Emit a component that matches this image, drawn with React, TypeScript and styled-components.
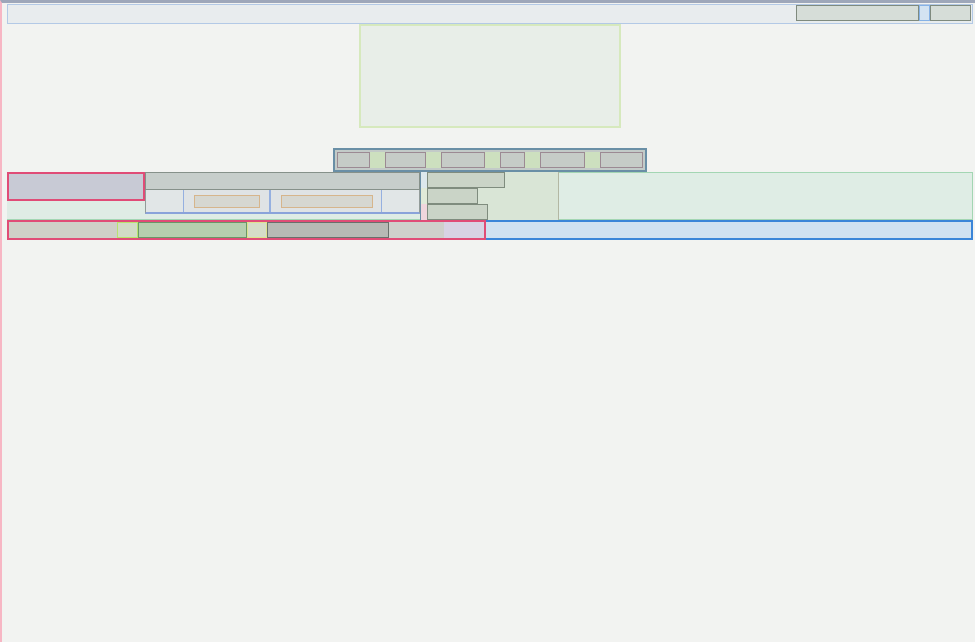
import React from "react";
import styled, { createGlobalStyle } from "styled-components";

const Global = createGlobalStyle`
  html, body { margin: 0; padding: 0; background: #f2f3f1; font-family: "Liberation Sans", Arial, sans-serif; }
  * { box-sizing: border-box; }
`;

const Page = styled.div`
  min-height: 642px;
  background: #f2f3f1;
  border-left: 2px solid #f7b6c4;
  border-top: 3px solid #9ea7ba;
  padding: 1px 2px 0 5px;
  display: flex;
  flex-direction: column;
`;

const Header = styled.header`
  height: 20px;
  border: 1px solid #b3c9e6;
  background: #e8ecee;
  display: flex;
  justify-content: flex-end;
  align-items: flex-start;
  padding-right: 1px;
`;

const HeaderItem = styled.div<{ $w: number; $blue?: boolean }>`
  width: ${(p) => p.$w}px;
  height: 16px;
  background: ${(p) => (p.$blue ? "#d3e3f2" : "#d6ddd8")};
  border: 1px solid ${(p) => (p.$blue ? "#86b2e6" : "#7f8a7e")};
`;

const Hero = styled.section`
  align-self: center;
  width: 262px;
  height: 104px;
  margin-bottom: 20px;
  border: 2px solid #d6e9bd;
  background: #e8eee8;
`;

const Toolbar = styled.nav`
  align-self: center;
  width: 314px;
  height: 24px;
  border: 2px solid #6a8fa6;
  background: #c3cbc8;
  display: flex;
  align-items: center;
  padding: 0 2px;
`;

const ToolButton = styled.div<{ $w: number }>`
  width: ${(p) => p.$w}px;
  height: 16px;
  background: #c6ccc7;
  border: 1px solid #9c8a93;
`;

const ToolGap = styled.div`
  width: 15px;
  height: 16px;
  background: #cde0bf;
`;

const MainRow = styled.div`
  height: 48px;
  border: 1px solid #a3d6b3;
  border-left: none;
  background: #dfece5;
  display: flex;
  align-items: flex-start;
`;

const Brand = styled.div`
  width: 138px;
  height: 29px;
  border: 2px solid #e04c77;
  background: #c8cad5;
  margin-top: -1px;
`;

const Panel = styled.div`
  width: 275px;
  display: flex;
  flex-direction: column;
  margin-top: -1px;
`;

const PanelTop = styled.div`
  height: 18px;
  background: #c7cecb;
  border: 1px solid #86918a;
`;

const PanelBody = styled.div`
  height: 24px;
  display: flex;
  border: 1px solid #939c9a;
  border-top: none;
  border-bottom: 2px solid #8aa3da;
  background: #e1e6e7;
`;

const PanelCell = styled.div<{ $w: number; $framed?: boolean }>`
  width: ${(p) => p.$w}px;
  display: flex;
  align-items: center;
  padding-left: 10px;
  border-left: ${(p) => (p.$framed ? "1px solid #95b0e0" : "none")};
  border-right: ${(p) => (p.$framed ? "1px solid #95b0e0" : "none")};
  background: ${(p) => (p.$framed ? "#dfe3e5" : "transparent")};
`;

const Field = styled.div<{ $w: number }>`
  width: ${(p) => p.$w}px;
  height: 13px;
  border: 1px solid #d6b58c;
  background: #d6d7d1;
`;

const Divider = styled.div`
  width: 7px;
  height: 48px;
  margin-top: -1px;
  display: flex;
  flex-direction: column;
  border-left: 1px solid #6a8fa6;
`;

const DividerSeg = styled.div<{ $c: string; $h: number }>`
  height: ${(p) => p.$h}px;
  background: ${(p) => p.$c};
`;

const Stack = styled.div`
  width: 132px;
  height: 48px;
  margin-top: -1px;
  display: flex;
  flex-direction: column;
  background: #d9e5d6;
  border-right: 1px solid #b3b7a3;
`;

const StackItem = styled.div<{ $w: number }>`
  width: ${(p) => p.$w}px;
  height: 16px;
  background: #cad4c7;
  border: 1px solid #7f8c7e;
`;

const Filler = styled.div`
  flex: 1;
  height: 46px;
  background: #dfede5;
`;

const BottomRow = styled.div`
  height: 20px;
  display: flex;
`;

const Tabs = styled.div`
  width: 479px;
  height: 20px;
  border: 2px solid #e04c77;
  display: flex;
`;

const Tab = styled.div<{ $w: number; $bg: string; $bd?: string }>`
  width: ${(p) => p.$w}px;
  height: 100%;
  background: ${(p) => p.$bg};
  border: ${(p) => (p.$bd ? `1px solid ${p.$bd}` : "none")};
`;

const Status = styled.div`
  flex: 1;
  height: 20px;
  border: 2px solid #3a85d8;
  border-left: none;
  background: #cfe1f1;
`;

export default function App() {
  const tools = [33, 41, 44, 25, 45, 43];
  return (
    <>
      <Global />
      <Page>
        <Header>
          <HeaderItem $w={123} />
          <HeaderItem $w={11} $blue />
          <HeaderItem $w={41} />
        </Header>
        <Hero />
        <Toolbar>
          {tools.map((w, i) => (
            <React.Fragment key={i}>
              {i > 0 && <ToolGap />}
              <ToolButton $w={w} />
            </React.Fragment>
          ))}
        </Toolbar>
        <MainRow>
          <Brand />
          <Panel>
            <PanelTop />
            <PanelBody>
              <PanelCell $w={37} />
              <PanelCell $w={87} $framed>
                <Field $w={66} />
              </PanelCell>
              <PanelCell $w={113} $framed>
                <Field $w={92} />
              </PanelCell>
              <PanelCell $w={37} />
            </PanelBody>
          </Panel>
          <Divider>
            <DividerSeg $c="#dce8ec" $h={16} />
            <DividerSeg $c="#e0ead8" $h={16} />
            <DividerSeg $c="#f0d6dc" $h={16} />
          </Divider>
          <Stack>
            <StackItem $w={78} />
            <StackItem $w={51} />
            <StackItem $w={61} />
          </Stack>
          <Filler />
        </MainRow>
        <BottomRow>
          <Tabs>
            <Tab $w={108} $bg="#cfd0c8" />
            <Tab $w={21} $bg="#d2dcc6" $bd="#b8e36f" />
            <Tab $w={109} $bg="#b6cfaf" $bd="#6a9767" />
            <Tab $w={20} $bg="#d6dcc8" $bd="#dde28f" />
            <Tab $w={122} $bg="#b7b9b5" $bd="#6a6f6b" />
            <Tab $w={55} $bg="#cfd0cb" />
            <Tab $w={40} $bg="#d8d3e4" />
          </Tabs>
          <Status />
        </BottomRow>
      </Page>
    </>
  );
}
